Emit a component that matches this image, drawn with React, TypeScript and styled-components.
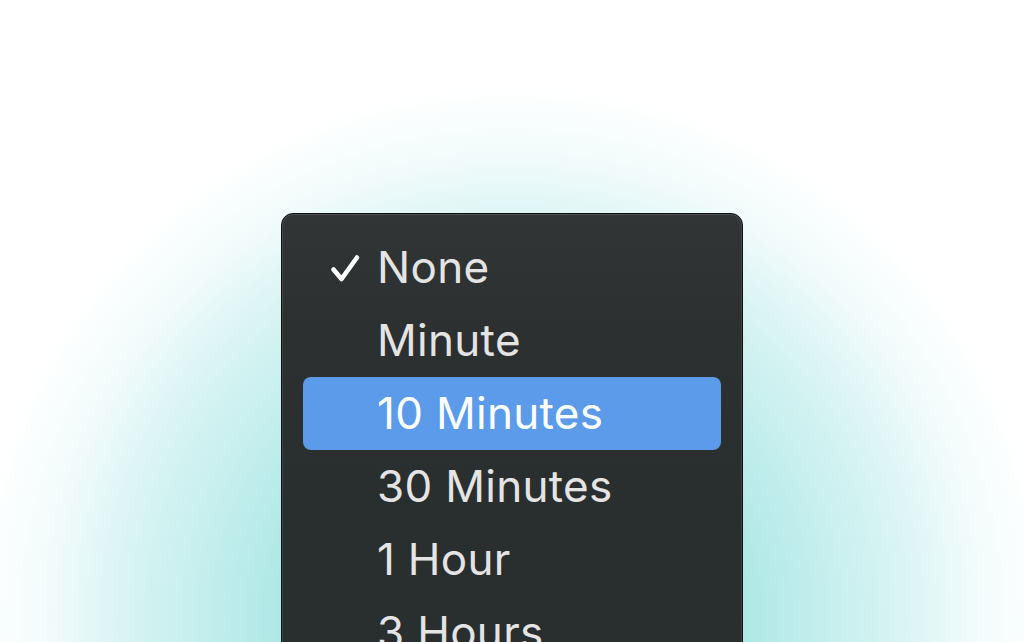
import React from "react";
import styled, { createGlobalStyle } from "styled-components";

const GlobalStyle = createGlobalStyle`
  html, body {
    margin: 0;
    padding: 0;
    background: #ffffff;
  }
  body {
    font-family: Inter, "Noto Sans", "Liberation Sans", sans-serif;
    -webkit-font-smoothing: antialiased;
  }
`;

const Stage = styled.div`
  width: 100vw;
  height: 100vh;
  overflow: hidden;
  display: flex;
  flex-direction: column;
  align-items: center;
  padding-top: 213px;
  box-sizing: border-box;
  background: radial-gradient(
    circle at 512px 620px,
    #ace7e5 0px,
    #ade8e6 230px,
    #c2eeed 305px,
    #daf4f4 395px,
    #f2fbfb 465px,
    #ffffff 535px
  );
`;

const Menu = styled.div`
  width: 462px;
  flex-shrink: 0;
  box-sizing: border-box;
  border: 1px solid #0d0f0f;
  border-radius: 12px;
  background: linear-gradient(180deg, #323535 0px, #2c3030 120px, #292e2e 300px);
  box-shadow: inset 0 0 0 1px rgba(255, 255, 255, 0.09), inset 0 1px 2px rgba(255, 255, 255, 0.06);
  padding: 17px 21px 16px;
  display: flex;
  flex-direction: column;
`;

const Row = styled.div<{ $selected?: boolean }>`
  height: 73px;
  display: flex;
  align-items: center;
  padding-left: 26px;
  border-radius: 8px;
  background: ${(p) => (p.$selected ? "#5b9bea" : "transparent")};
  color: ${(p) => (p.$selected ? "#ffffff" : "#e4e4e4")};
  font-size: 44px;
  line-height: 73px;
  letter-spacing: 0.3px;
  white-space: nowrap;
`;

const CheckSlot = styled.span`
  width: 48px;
  height: 73px;
  flex-shrink: 0;
  display: flex;
  align-items: center;
`;

const Label = styled.span`
  display: block;
`;

const Check = () => (
  <svg width="32" height="32" viewBox="0 0 32 32" fill="none">
    <path
      d="M4.5 17.5 L12.5 27 L28 5.5"
      stroke="#ffffff"
      strokeWidth="4.6"
      strokeLinecap="round"
      strokeLinejoin="round"
    />
  </svg>
);

const items = [
  { label: "None", checked: true },
  { label: "Minute" },
  { label: "10 Minutes", selected: true },
  { label: "30 Minutes" },
  { label: "1 Hour" },
  { label: "3 Hours" },
];

export default function App() {
  return (
    <>
      <GlobalStyle />
      <Stage>
        <Menu>
          {items.map((it) => (
            <Row key={it.label} $selected={it.selected}>
              <CheckSlot>{it.checked ? <Check /> : null}</CheckSlot>
              <Label>{it.label}</Label>
            </Row>
          ))}
        </Menu>
      </Stage>
    </>
  );
}
